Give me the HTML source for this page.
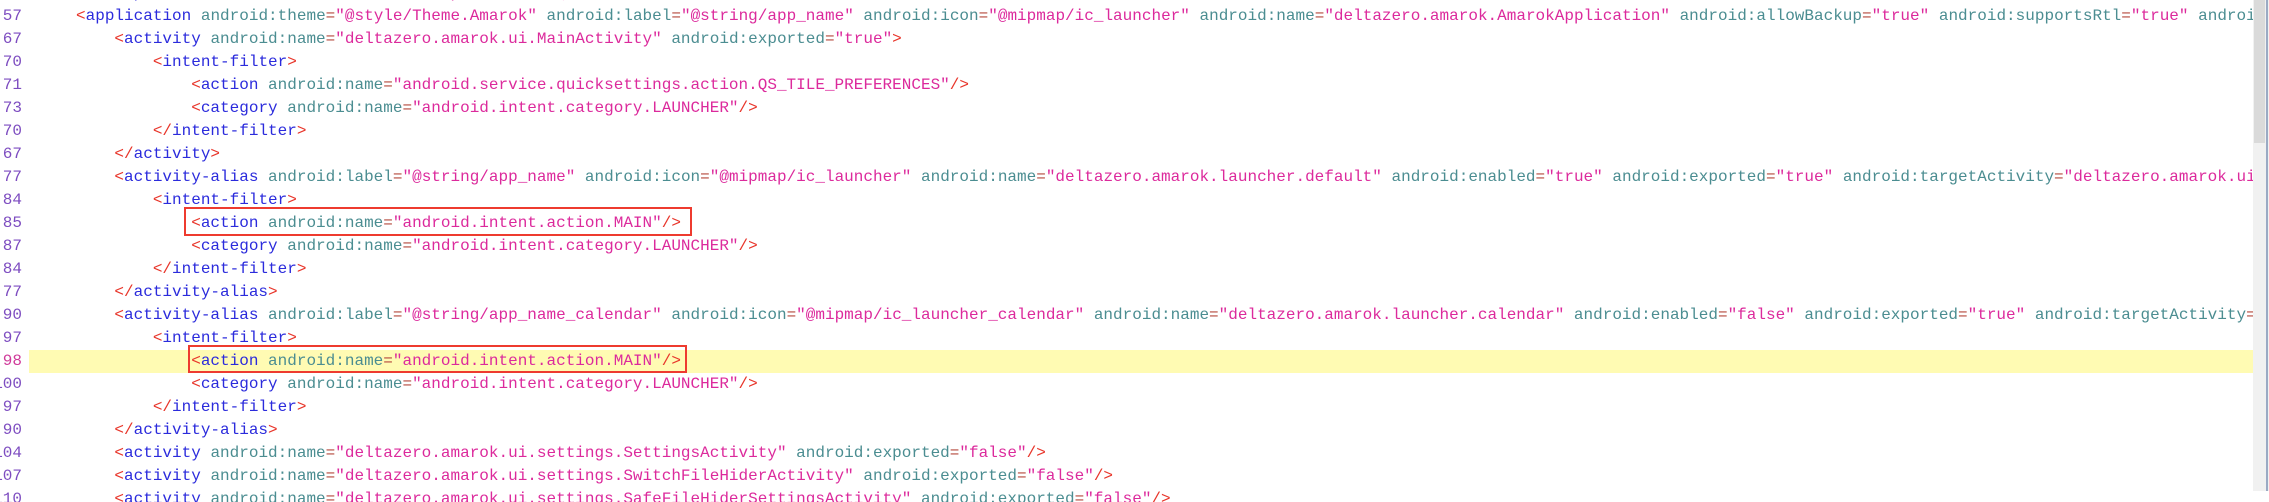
<!DOCTYPE html>
<html><head><meta charset="utf-8"><style>
html,body{margin:0;padding:0;width:2269px;height:491px;overflow:hidden;background:#fff;}
#code{position:absolute;left:0;top:-18.5px;width:2253px;height:520px;overflow:hidden;}
.r{position:relative;height:23px;line-height:23px;white-space:pre;font-family:"Liberation Mono",monospace;font-size:16px;}
.n{position:absolute;right:calc(100% - 22px);width:40px;text-align:right;color:#7d4cc0;}
.c{position:absolute;left:37.6px;}
.b{color:#e8352a}.t{color:#2b2bdc}.a{color:#4b8d91}.e{color:#b5483c}.v{color:#dc2a9c}
.hl{background:#fffbb3;}
.hl .n{color:#d03a9a}
.box{position:absolute;border:2.5px solid #ee3b2f;box-sizing:border-box;}
#sb{position:absolute;left:2253px;top:0;width:16px;height:491px;background:#f1f1f1;}
#th{position:absolute;left:2254px;top:0;width:11px;height:143px;background:#dadada;}
#ln{position:absolute;left:2266px;top:0;width:2px;height:491px;background:#9aaac4;}
</style></head><body>
<div id="code">
<div class="r"><span class="n">55</span><span class="c">    <span class="b">&lt;</span><span class="t">uses-permission</span> <span class="a">android:name</span><span class="e">=</span><span class="v">"android.permission.QUERY_ALL_PACKAGES"</span><span class="b">/&gt;</span></span></div>
<div class="r"><span class="n">57</span><span class="c">    <span class="b">&lt;</span><span class="t">application</span> <span class="a">android:theme</span><span class="e">=</span><span class="v">"@style/Theme.Amarok"</span> <span class="a">android:label</span><span class="e">=</span><span class="v">"@string/app_name"</span> <span class="a">android:icon</span><span class="e">=</span><span class="v">"@mipmap/ic_launcher"</span> <span class="a">android:name</span><span class="e">=</span><span class="v">"deltazero.amarok.AmarokApplication"</span> <span class="a">android:allowBackup</span><span class="e">=</span><span class="v">"true"</span> <span class="a">android:supportsRtl</span><span class="e">=</span><span class="v">"true"</span> <span class="a">android:dataExtractionRules</span></span></div>
<div class="r"><span class="n">67</span><span class="c">        <span class="b">&lt;</span><span class="t">activity</span> <span class="a">android:name</span><span class="e">=</span><span class="v">"deltazero.amarok.ui.MainActivity"</span> <span class="a">android:exported</span><span class="e">=</span><span class="v">"true"</span><span class="b">&gt;</span></span></div>
<div class="r"><span class="n">70</span><span class="c">            <span class="b">&lt;</span><span class="t">intent-filter</span><span class="b">&gt;</span></span></div>
<div class="r"><span class="n">71</span><span class="c">                <span class="b">&lt;</span><span class="t">action</span> <span class="a">android:name</span><span class="e">=</span><span class="v">"android.service.quicksettings.action.QS_TILE_PREFERENCES"</span><span class="b">/&gt;</span></span></div>
<div class="r"><span class="n">73</span><span class="c">                <span class="b">&lt;</span><span class="t">category</span> <span class="a">android:name</span><span class="e">=</span><span class="v">"android.intent.category.LAUNCHER"</span><span class="b">/&gt;</span></span></div>
<div class="r"><span class="n">70</span><span class="c">            <span class="b">&lt;/</span><span class="t">intent-filter</span><span class="b">&gt;</span></span></div>
<div class="r"><span class="n">67</span><span class="c">        <span class="b">&lt;/</span><span class="t">activity</span><span class="b">&gt;</span></span></div>
<div class="r"><span class="n">77</span><span class="c">        <span class="b">&lt;</span><span class="t">activity-alias</span> <span class="a">android:label</span><span class="e">=</span><span class="v">"@string/app_name"</span> <span class="a">android:icon</span><span class="e">=</span><span class="v">"@mipmap/ic_launcher"</span> <span class="a">android:name</span><span class="e">=</span><span class="v">"deltazero.amarok.launcher.default"</span> <span class="a">android:enabled</span><span class="e">=</span><span class="v">"true"</span> <span class="a">android:exported</span><span class="e">=</span><span class="v">"true"</span> <span class="a">android:targetActivity</span><span class="e">=</span><span class="v">"deltazero.amarok.ui.MainActivity"</span><span class="b">&gt;</span></span></div>
<div class="r"><span class="n">84</span><span class="c">            <span class="b">&lt;</span><span class="t">intent-filter</span><span class="b">&gt;</span></span></div>
<div class="r"><span class="n">85</span><span class="c">                <span class="b">&lt;</span><span class="t">action</span> <span class="a">android:name</span><span class="e">=</span><span class="v">"android.intent.action.MAIN"</span><span class="b">/&gt;</span></span></div>
<div class="r"><span class="n">87</span><span class="c">                <span class="b">&lt;</span><span class="t">category</span> <span class="a">android:name</span><span class="e">=</span><span class="v">"android.intent.category.LAUNCHER"</span><span class="b">/&gt;</span></span></div>
<div class="r"><span class="n">84</span><span class="c">            <span class="b">&lt;/</span><span class="t">intent-filter</span><span class="b">&gt;</span></span></div>
<div class="r"><span class="n">77</span><span class="c">        <span class="b">&lt;/</span><span class="t">activity-alias</span><span class="b">&gt;</span></span></div>
<div class="r"><span class="n">90</span><span class="c">        <span class="b">&lt;</span><span class="t">activity-alias</span> <span class="a">android:label</span><span class="e">=</span><span class="v">"@string/app_name_calendar"</span> <span class="a">android:icon</span><span class="e">=</span><span class="v">"@mipmap/ic_launcher_calendar"</span> <span class="a">android:name</span><span class="e">=</span><span class="v">"deltazero.amarok.launcher.calendar"</span> <span class="a">android:enabled</span><span class="e">=</span><span class="v">"false"</span> <span class="a">android:exported</span><span class="e">=</span><span class="v">"true"</span> <span class="a">android:targetActivity</span><span class="e">=</span><span class="v">"deltazero.amarok.ui.MainActivity"</span><span class="b">&gt;</span></span></div>
<div class="r"><span class="n">97</span><span class="c">            <span class="b">&lt;</span><span class="t">intent-filter</span><span class="b">&gt;</span></span></div>
<div class="r hl" style="margin-left:29px"><span class="n" style="right:calc(100% + 7px)">98</span><span class="c" style="left:8.6px">                <span class="b">&lt;</span><span class="t">action</span> <span class="a">android:name</span><span class="e">=</span><span class="v">"android.intent.action.MAIN"</span><span class="b">/&gt;</span></span></div>
<div class="r"><span class="n">100</span><span class="c">                <span class="b">&lt;</span><span class="t">category</span> <span class="a">android:name</span><span class="e">=</span><span class="v">"android.intent.category.LAUNCHER"</span><span class="b">/&gt;</span></span></div>
<div class="r"><span class="n">97</span><span class="c">            <span class="b">&lt;/</span><span class="t">intent-filter</span><span class="b">&gt;</span></span></div>
<div class="r"><span class="n">90</span><span class="c">        <span class="b">&lt;/</span><span class="t">activity-alias</span><span class="b">&gt;</span></span></div>
<div class="r"><span class="n">104</span><span class="c">        <span class="b">&lt;</span><span class="t">activity</span> <span class="a">android:name</span><span class="e">=</span><span class="v">"deltazero.amarok.ui.settings.SettingsActivity"</span> <span class="a">android:exported</span><span class="e">=</span><span class="v">"false"</span><span class="b">/&gt;</span></span></div>
<div class="r"><span class="n">107</span><span class="c">        <span class="b">&lt;</span><span class="t">activity</span> <span class="a">android:name</span><span class="e">=</span><span class="v">"deltazero.amarok.ui.settings.SwitchFileHiderActivity"</span> <span class="a">android:exported</span><span class="e">=</span><span class="v">"false"</span><span class="b">/&gt;</span></span></div>
<div class="r"><span class="n">110</span><span class="c">        <span class="b">&lt;</span><span class="t">activity</span> <span class="a">android:name</span><span class="e">=</span><span class="v">"deltazero.amarok.ui.settings.SafeFileHiderSettingsActivity"</span> <span class="a">android:exported</span><span class="e">=</span><span class="v">"false"</span><span class="b">/&gt;</span></span></div>
</div>
<div class="box" style="left:184px;top:207px;width:508px;height:29px;"></div>
<div class="box" style="left:188px;top:345px;width:499px;height:28px;"></div>
<div id="sb"></div><div id="th"></div><div id="ln"></div>
</body></html>
